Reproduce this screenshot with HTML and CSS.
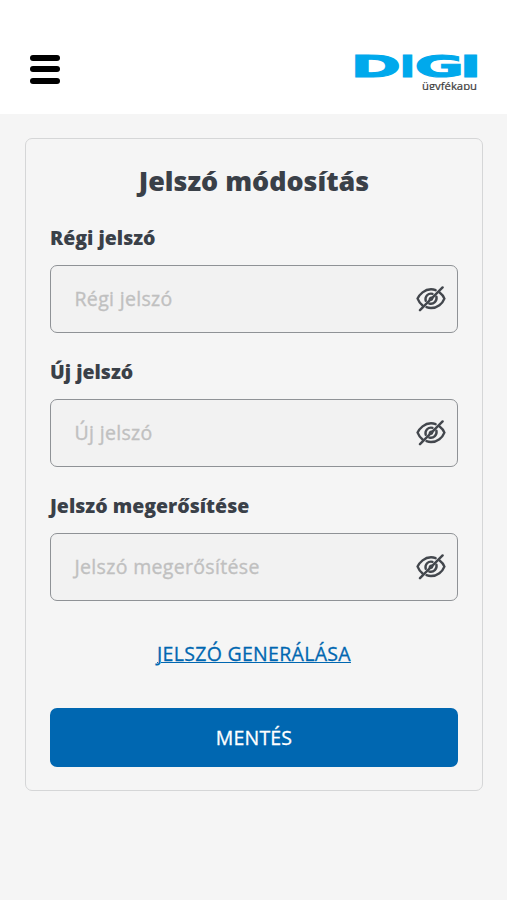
FILE: index.html
```html
<!DOCTYPE html>
<html lang="hu">
<head>
<meta charset="utf-8">
<meta name="viewport" content="width=device-width, initial-scale=1">
<title>Jelszó módosítás</title>
<link rel="stylesheet" href="styles.css">
</head>
<body>
<svg class="sprite" aria-hidden="true">
  <symbol id="eye-off" viewBox="0 0 30 26">
    <g fill="none" stroke="#43474d" stroke-width="2.4" stroke-linecap="round">
      <path d="M19.600 4.200C18.200 3.600 16.700 3.300 15 3.300C8.500 3.300 3.500 8.300 1.600 12.600C2.600 15.200 4.300 17.700 6.600 19.500"/>
      <path d="M23.600 6.500C25.900 8.200 27.500 10.300 28.400 12.600C26.500 17.600 21.400 22 15 22C13.400 22 11.900 21.700 10.500 21.200"/>
      <path d="M16.500 7.800C12.200 6.800 8.600 10.400 9.700 14.800"/>
      <path d="M20.400 10.600C21.400 15 17.600 18.700 13.300 17.600"/>
      <path d="M15.600 11.400C14.200 11.500 13.500 12.500 13.500 13.600M16.600 12.200C16.500 13.300 15.800 14 14.900 14.100" stroke-width="1.800"/>
      <path d="M26.600 1.400L4 24.200"/>
    </g>
  </symbol>
</svg>
<header class="topbar">
  <button class="menu" aria-label="Menü"><span></span><span></span><span></span></button>
  <svg class="logo" width="124" height="37" viewBox="0 0 124 37">
    <g class="brand">
      <text transform="translate(-3.600 23.500) scale(2 1)">D</text>
      <text transform="translate(45.600 23.500) scale(1.400 1)">I</text>
      <text transform="translate(60.600 23.500) scale(1.980 1)">G</text>
      <text transform="translate(105.800 23.500) scale(1.900 1)">I</text>
    </g>
    <text class="portal" x="68" y="36.500" textLength="55" lengthAdjust="spacingAndGlyphs">ügyfékapu</text>
  </svg>
</header>
<main class="card">
  <h1>Jelszó módosítás</h1>
  <label class="field"><span class="label">Régi jelszó</span>
    <span class="box"><input type="password" placeholder="Régi jelszó"><svg class="eye"><use href="#eye-off"/></svg></span></label>
  <label class="field"><span class="label">Új jelszó</span>
    <span class="box"><input type="password" placeholder="Új jelszó"><svg class="eye"><use href="#eye-off"/></svg></span></label>
  <label class="field"><span class="label">Jelszó megerősítése</span>
    <span class="box"><input type="password" placeholder="Jelszó megerősítése"><svg class="eye"><use href="#eye-off"/></svg></span></label>
  <a class="generate" href="#">JELSZÓ GENERÁLÁSA</a>
  <button class="save">MENTÉS</button>
</main>
</body>
</html>
```
FILE: styles.css
```css
* { box-sizing: border-box; }
body {
  margin: 0;
  min-height: 900px;
  background: #f5f5f5;
  color: #3a4048;
  font-family: "Open Sans", sans-serif;
}
button { border: 0; padding: 0; font: inherit; }
.sprite { display: none; }
.topbar {
  display: flex;
  justify-content: space-between;
  align-items: flex-start;
  height: 114px;
  padding: 53px 29px 0 30px;
  background: #fff;
}
.menu {
  display: flex;
  flex-direction: column;
  gap: 5.500px;
  margin-top: 1.500px;
  background: none;
}
.menu span { width: 30px; height: 6px; border-radius: 3px; background: #000; }
.logo { display: block; overflow: hidden; }
.brand { font: bold 30.500px "DejaVu Sans", sans-serif; fill: #00a9ec; stroke: #00a9ec; stroke-width: 1; }
.portal { font: 11px "Open Sans", sans-serif; fill: #3c3c3c; stroke: #3c3c3c; stroke-width: .2; }
.card {
  display: flex;
  flex-direction: column;
  width: 458px;
  height: 653px;
  margin: 24px 0 0 25px;
  padding: 22px 24px 0 24px;
  border: 1.500px solid #d5d6d7;
  border-radius: 7px;
}
h1 {
  margin: 0 0 23px;
  font-size: 26.900px;
  line-height: 40px;
  font-weight: 800;
  text-align: center;
}
.field { display: flex; flex-direction: column; height: 134px; }
.label { font-size: 19.500px; line-height: 28px; font-weight: 800; margin-bottom: 13px; }
.box {
  display: flex;
  align-items: center;
  height: 68px;
  padding: 0 11px 0 13.500px;
  border: 1px solid #8f9296;
  border-radius: 7px;
  background: #f2f2f2;
}
input {
  flex: 1;
  min-width: 0;
  padding: 0 0 1px 6px;
  text-indent: 4px;
  border: 0;
  outline: 0;
  background: none;
  font: 500 19.500px "Open Sans", sans-serif;
  letter-spacing: .33px;
}
input::placeholder { color: #c0c0c0; opacity: 1; -webkit-text-stroke: .35px #c0c0c0; }
.eye { width: 30px; height: 26px; }
.generate {
  align-self: center;
  margin: 13px 0 39px;
  font-size: 19.500px;
  line-height: 30px;
  letter-spacing: .3px;
  color: #0067b1;
  -webkit-text-stroke: .3px #0067b1;
  text-decoration-thickness: 1px;
  text-underline-offset: 1px;
}
.save {
  height: 59px;
  border-radius: 7px;
  background: #0067b1;
  color: #fff;
  font-size: 19.500px;
  letter-spacing: .2px;
  -webkit-text-stroke: .3px #fff;
}
```
